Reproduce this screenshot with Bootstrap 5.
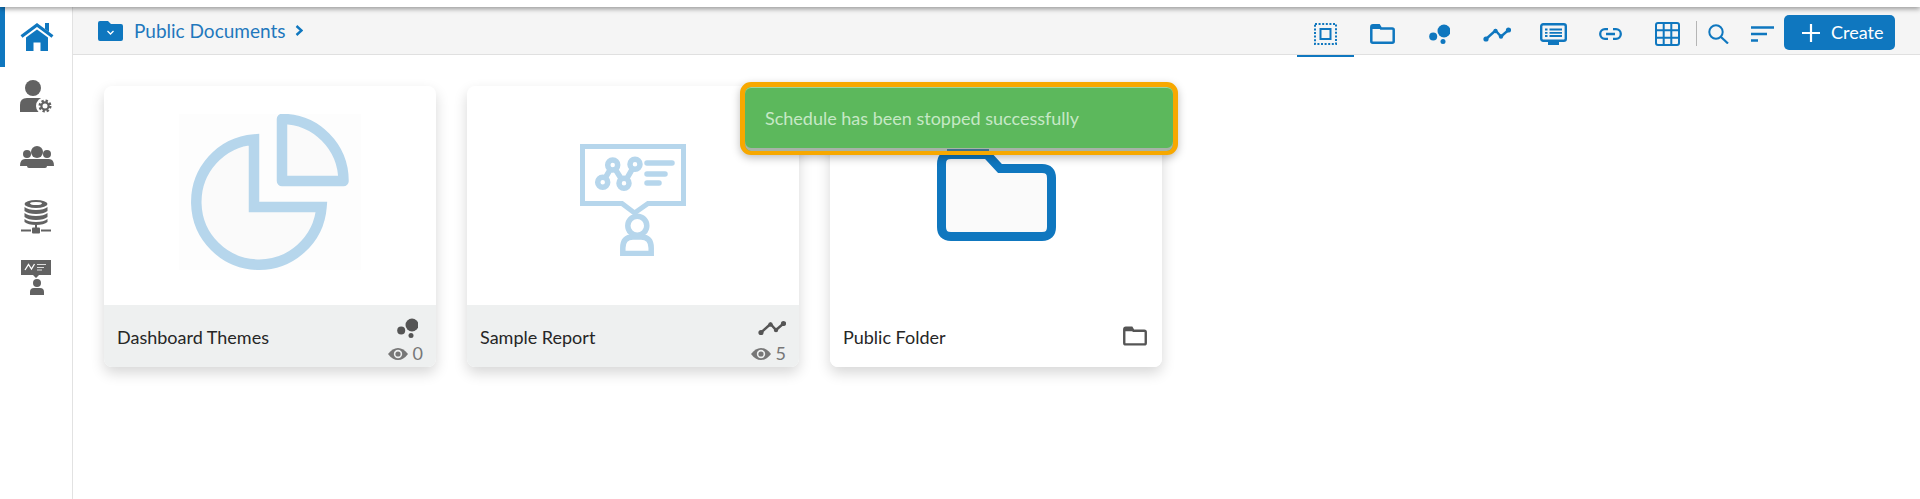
<!DOCTYPE html>
<html lang="en">
<head>
<meta charset="utf-8">
<title>Public Documents</title>
<link rel="stylesheet" href="https://cdn.jsdelivr.net/npm/bootstrap@5.3.0/dist/css/bootstrap.min.css">
<style>
html,body{height:100%;overflow:hidden}
body{font-family:"Lato","Noto Sans",sans-serif;background:#fff;color:#2a2a2a;font-size:18px}
.top-strip{height:7px;background:#fff;box-shadow:0 2px 5px rgba(0,0,0,.38);position:relative;z-index:3}
.shell{height:492px}
.side-rail{width:73px;border-right:1px solid #e2e2e2;flex:none}
.rail-item{height:60px;padding-left:20px;color:#626262;border-left:0}
.rail-item.on{color:#0f77bf;position:relative}
.rail-item.on::before{content:"";position:absolute;left:0;top:0;bottom:0;width:5px;background:#0f77bf}
.crumb-bar{height:48px;background:#f5f5f5;border-bottom:1px solid #e0e0e0;padding-left:25px;padding-right:25px;color:#0f77bf}
.crumb-name{font-size:19px;margin-left:11px;margin-right:10px;color:#1f78bd;padding-top:2px}
.tool-slot{width:57px;align-self:stretch;color:#0f77bf;padding-top:6px;margin-bottom:-3px;border-bottom:2px solid transparent}
.tool-slot.on{border-bottom-color:#0f77bf}
.tool-sep{width:1px;height:25px;background:#b5b5b5;margin-top:5px}
.tool-narrow{width:43.5px;color:#0f77bf;padding-top:7px}
.create-btn{width:111px;height:35px;background:#0f77bf;color:#fff;border:0;border-radius:5px;padding:0 0 0 18px;font-size:18px;gap:11px;margin-top:4px}
.create-btn:hover{background:#0f77bf;color:#fff}
.card-grid{padding:31px;gap:31px}
.doc-card{width:332px;height:281px;border:0;border-radius:8px;box-shadow:0 6px 14px rgba(0,0,0,.16);background:#fff}
.doc-thumb{height:219px;padding-top:28px}
.thumb-box{background:#fdfdfd}
.report-art{margin-top:30px}
.doc-foot{height:62px;background:#eef0f0;padding:11px 13px 0 13px;border-radius:0 0 8px 8px;font-size:18px;color:#262626}
.doc-foot.plain{background:#fff}
.doc-title{margin-top:-9px}
.meta-col{color:#555}
.meta-icon{height:20px;margin-bottom:4px}
.meta-icon.inset{margin-right:5px}
.meta-count{height:24px;gap:5px;color:#777;font-size:18px}
.folder-mark{margin-top:-11px;margin-right:2px;color:#555}
.notice{position:absolute;left:740px;top:82px;width:438px;height:73px;margin:0;border:5px solid #f7a800;border-bottom-width:4px;border-radius:11px;background:#5cb85c;color:#c6e8c6;padding:0 0 2px 20px;font-size:18px;box-shadow:inset 0 -3px 0 #a7b3a7,inset 0 1px 0 #9fd49f,0 3px 8px rgba(0,0,0,.25);z-index:4}
.notice::after{content:"";position:absolute;left:202px;bottom:0;width:42px;height:2px;background:#3f6f8c}
</style>
</head>
<body>
<svg width="0" height="0" class="d-block position-absolute">
<defs>
<symbol id="s-bubbles" viewBox="0 0 21 20"><circle cx="15" cy="7" r="6.5" fill="currentColor"/><circle cx="4.2" cy="12.5" r="4" fill="currentColor"/><circle cx="14" cy="17.5" r="2.5" fill="currentColor"/></symbol>
<symbol id="s-line" viewBox="0 0 28 15"><path d="M3 12 12.5 3.5 18 9.5 25.5 3" fill="none" stroke="currentColor" stroke-width="2.4"/><circle cx="3" cy="12" r="2.6" fill="currentColor"/><circle cx="12.5" cy="4" r="2.2" fill="currentColor"/><circle cx="18" cy="9.5" r="2.2" fill="currentColor"/><circle cx="25.5" cy="3" r="2.6" fill="currentColor"/></symbol>
<symbol id="s-folder" viewBox="0 0 25 20"><path d="M1.3 3.2Q1.3 1.3 3 1.3H9L11 4.6H22.2Q23.7 4.6 23.7 6V17.2Q23.7 18.7 22.2 18.7H2.8Q1.3 18.7 1.3 17.2Z" fill="none" stroke="currentColor" stroke-width="2.5"/><path d="M1.5 1.5H9L11 5H1.5Z" fill="currentColor"/></symbol>
<symbol id="s-eye" viewBox="0 0 20 12"><path d="M0 6Q4.5 0 10 0T20 6Q15.500 12 10 12T0 6Z" fill="currentColor"/><circle cx="10" cy="6" r="4.2" fill="#eef0f0"/><circle cx="10" cy="6" r="2.600" fill="currentColor"/></symbol>
</defs>
</svg>

<div class="top-strip"></div>
<div class="shell d-flex">
  <nav class="side-rail d-flex flex-column">
    <a class="rail-item on d-flex align-items-center" href="#" aria-label="Home">
      <svg width="34" height="36" viewBox="0 0 34 36"><path d="M1.500 17.500 17 6 32.500 17.500" fill="none" stroke="currentColor" stroke-width="3.200"/><path d="M25 4h4v9l-4-3z" fill="currentColor"/><path d="M6 18.500 17 10.500 28 18.500V32H20.500V23.500H13.500V32H6Z" fill="currentColor"/></svg>
    </a>
    <a class="rail-item d-flex align-items-center" href="#" aria-label="Users">
      <svg width="34" height="36" viewBox="0 0 34 36"><circle cx="13" cy="9" r="8" fill="currentColor"/><path d="M0 33V26Q0 19 7 19H19Q24 19 26 22V33Z" fill="currentColor"/><circle cx="25" cy="27" r="9" fill="#fff"/><circle cx="25" cy="27" r="5.300" fill="none" stroke="currentColor" stroke-width="2.400" stroke-dasharray="2.300 1.850"/><circle cx="25" cy="27" r="3.600" fill="#fff" stroke="currentColor" stroke-width="2.200"/></svg>
    </a>
    <a class="rail-item d-flex align-items-center" href="#" aria-label="Groups">
      <svg width="34" height="36" viewBox="0 0 34 36"><circle cx="17" cy="13" r="6" fill="currentColor"/><circle cx="7" cy="15" r="4" fill="currentColor"/><circle cx="27" cy="15" r="4" fill="currentColor"/><path d="M0 27Q0 20 5 20H29Q34 20 34 27H27Q27 29 25 29H9Q7 29 7 27Z" fill="currentColor"/></svg>
    </a>
    <a class="rail-item d-flex align-items-center" href="#" aria-label="Data">
      <svg width="34" height="36" viewBox="0 0 34 36"><ellipse cx="16" cy="5" rx="11.500" ry="4" fill="currentColor"/><ellipse cx="16" cy="4.500" rx="6" ry="1.600" fill="#fff"/><path d="M4.500 8Q8 11 16 11T27.500 8V12Q24 15 16 15T4.500 12Z" fill="currentColor"/><path d="M4.500 14Q8 17 16 17T27.500 14V18Q24 21 16 21T4.500 18Z" fill="currentColor"/><path d="M4.500 20Q8 23 16 23T27.500 20V23Q24 26 16 26T4.500 23Z" fill="currentColor"/><path d="M15 26h2v4h-2z" fill="currentColor"/><path d="M1 31.500H11M21 31.500H31" stroke="currentColor" stroke-width="2.200"/><rect x="12" y="28.500" width="8" height="6" rx="1" fill="currentColor"/></svg>
    </a>
    <a class="rail-item d-flex align-items-center" href="#" aria-label="Presenter">
      <svg width="34" height="36" viewBox="0 0 34 36"><path d="M1 1H31V16H19L16 19 13 16H1Z" fill="currentColor"/><path d="M5 11 8.500 5.500 11.500 10 14.500 5" fill="none" stroke="#fff" stroke-width="1.300"/><path d="M17 5.500H26M17 8.500H24M17 11H22" stroke="#ddd" stroke-width="1.200"/><circle cx="17" cy="24" r="4" fill="currentColor"/><path d="M10 36V33Q10 29 14 29H20Q24 29 24 33V36Z" fill="currentColor"/></svg>
    </a>
  </nav>

  <div class="flex-grow-1 d-flex flex-column">
    <header class="crumb-bar d-flex align-items-center">
      <svg width="25" height="20" viewBox="0 0 25 20"><path d="M0 2Q0 0 2 0H10L13 3H23Q25 3 25 5V18Q25 20 23 20H2Q0 20 0 18Z" fill="currentColor"/><path d="M9.500 10 12.500 13 15.500 10" fill="none" stroke="#fff" stroke-width="1.300"/></svg>
      <span class="crumb-name">Public Documents</span>
      <svg width="8" height="11" viewBox="0 0 8 11"><path d="M1.500 1 6.500 5.500 1.500 10" fill="none" stroke="currentColor" stroke-width="2.400"/></svg>

      <div class="ms-auto d-flex align-items-center h-100">
        <a class="tool-slot on d-flex align-items-center justify-content-center" href="#" aria-label="All">
          <svg width="23" height="22" viewBox="0 0 23 22"><rect x="1" y="1" width="21" height="20" fill="none" stroke="currentColor" stroke-width="2" stroke-dasharray="2 1.600"/><rect x="6.500" y="6" width="10" height="10" fill="none" stroke="currentColor" stroke-width="2"/></svg>
        </a>
        <a class="tool-slot d-flex align-items-center justify-content-center" href="#" aria-label="Folders"><svg width="25" height="20"><use href="#s-folder"/></svg></a>
        <a class="tool-slot d-flex align-items-center justify-content-center" href="#" aria-label="Dashboards"><svg width="21" height="20"><use href="#s-bubbles"/></svg></a>
        <a class="tool-slot d-flex align-items-center justify-content-center" href="#" aria-label="Reports"><svg width="28" height="15"><use href="#s-line"/></svg></a>
        <a class="tool-slot d-flex align-items-center justify-content-center" href="#" aria-label="Presentations">
          <svg width="27" height="22" viewBox="0 0 27 22"><rect x="1.200" y="1.200" width="24.600" height="16.600" rx="2" fill="none" stroke="currentColor" stroke-width="2.400"/><path d="M9.500 6.500H22M9.500 9.800H22M9.500 13H22M5 6.500H7.500M5 9.800H7.500M5 13H7.500" stroke="currentColor" stroke-width="1.800"/><rect x="8" y="18" width="11" height="4" fill="currentColor"/></svg>
        </a>
        <a class="tool-slot d-flex align-items-center justify-content-center" href="#" aria-label="Links">
          <svg width="23" height="12" viewBox="0 0 23 12"><path d="M9 1.200H6a4.800 4.800 0 0 0 0 9.600H9M14 1.200H17a4.800 4.800 0 0 1 0 9.600H14M7 6H16" fill="none" stroke="currentColor" stroke-width="2.300"/></svg>
        </a>
        <a class="tool-slot d-flex align-items-center justify-content-center" href="#" aria-label="Tables">
          <svg width="25" height="24" viewBox="0 0 25 24"><rect x="1" y="1" width="23" height="22" rx="2" fill="none" stroke="currentColor" stroke-width="2"/><path d="M8.700 1V23M16.300 1V23M1 8.300H24M1 15.700H24" stroke="currentColor" stroke-width="2"/></svg>
        </a>
        <span class="tool-sep"></span>
        <a class="tool-narrow d-flex align-items-center justify-content-center" href="#" aria-label="Search">
          <svg width="21" height="20" viewBox="0 0 21 20"><circle cx="8" cy="8" r="6.700" fill="none" stroke="currentColor" stroke-width="2"/><path d="M13 13 20 19.500" stroke="currentColor" stroke-width="2.200"/></svg>
        </a>
        <a class="tool-narrow d-flex align-items-center justify-content-center" href="#" aria-label="Sort">
          <svg width="23" height="16" viewBox="0 0 23 16"><path d="M0 1.500H23M0 8H16M0 14.500H7" stroke="currentColor" stroke-width="2.300"/></svg>
        </a>
        <button class="btn create-btn d-flex align-items-center" type="button">
          <svg width="18" height="18" viewBox="0 0 18 18"><path d="M9 0V18M0 9H18" stroke="#fff" stroke-width="2.200"/></svg>
          <span>Create</span>
        </button>
      </div>
    </header>

    <main class="card-grid d-flex align-items-start">
      <article class="card doc-card">
        <div class="doc-thumb d-flex justify-content-center align-items-start">
          <svg class="thumb-box" width="182" height="156" viewBox="0 0 182 156">
            <path d="M75 93V25.500A62.700 62.700 0 1 0 142.500 93Z" fill="#fafafa" stroke="#b6d6ec" stroke-width="10.500"/>
            <path d="M103 5V67H164.500A61.500 62 0 0 0 103 5Z" fill="#fafafa" stroke="#b6d6ec" stroke-width="10.500" stroke-linejoin="round"/>
          </svg>
        </div>
        <div class="doc-foot d-flex justify-content-between align-items-center">
          <span class="doc-title">Dashboard Themes</span>
          <div class="meta-col d-flex flex-column align-items-end">
            <svg class="meta-icon inset" width="21" height="20"><use href="#s-bubbles"/></svg>
            <div class="meta-count d-flex align-items-center"><svg width="20" height="12"><use href="#s-eye"/></svg><span>0</span></div>
          </div>
        </div>
      </article>

      <article class="card doc-card">
        <div class="doc-thumb d-flex justify-content-center align-items-start">
          <svg class="report-art" width="106" height="112" viewBox="0 0 106 112">
            <path d="M2.500 2.500H103.500V59.500H68L54.500 69 42 59.500H2.500Z" fill="#fff" stroke="#b6d6ec" stroke-width="5"/>
            <path d="M22.700 38.300 32.700 21 44 39.300 55 20.300" fill="none" stroke="#b6d6ec" stroke-width="5.500"/>
            <g fill="#fff" stroke="#b6d6ec" stroke-width="5.500"><circle cx="22.700" cy="38.300" r="5"/><circle cx="32.700" cy="21" r="5"/><circle cx="44" cy="39.300" r="5"/><circle cx="55" cy="20.300" r="5"/></g>
            <path d="M67 19H92M67 30H85M67 39H79" stroke="#b6d6ec" stroke-width="5.500" stroke-linecap="round"/>
            <circle cx="57.300" cy="81.700" r="9.500" fill="#fff" stroke="#b6d6ec" stroke-width="5.500"/>
            <path d="M42.800 109.500V104Q42.800 93 53 93H61Q71.200 93 71.200 104V109.500Z" fill="#fff" stroke="#b6d6ec" stroke-width="5.500"/>
          </svg>
        </div>
        <div class="doc-foot d-flex justify-content-between align-items-center">
          <span class="doc-title">Sample Report</span>
          <div class="meta-col d-flex flex-column align-items-end">
            <svg class="meta-icon" width="28" height="20" viewBox="0 -2.500 28 20"><use href="#s-line" width="28" height="15"/></svg>
            <div class="meta-count d-flex align-items-center"><svg width="20" height="12"><use href="#s-eye"/></svg><span>5</span></div>
          </div>
        </div>
      </article>

      <article class="card doc-card">
        <div class="doc-thumb d-flex justify-content-center align-items-start pt-0">
          <svg class="folder-art" width="119" height="155" viewBox="0 -64 119 155">
            <path d="M4.500 14Q4.500 4.500 14 4.500H50L63 18.500H105Q114.500 18.500 114.500 28V77Q114.500 86.500 105 86.500H14Q4.500 86.500 4.500 77Z" fill="#fafafa" stroke="#0f77bf" stroke-width="9"/>
          </svg>
        </div>
        <div class="doc-foot plain d-flex justify-content-between align-items-center">
          <span class="doc-title">Public Folder</span>
          <svg class="folder-mark" width="24" height="20"><use href="#s-folder" width="24" height="20"/></svg>
        </div>
      </article>
    </main>
  </div>
</div>

<div class="alert notice d-flex align-items-center" role="alert">Schedule has been stopped successfully</div>
<script src="https://cdn.jsdelivr.net/npm/bootstrap@5.3.0/dist/js/bootstrap.bundle.min.js"></script>
</body>
</html>
